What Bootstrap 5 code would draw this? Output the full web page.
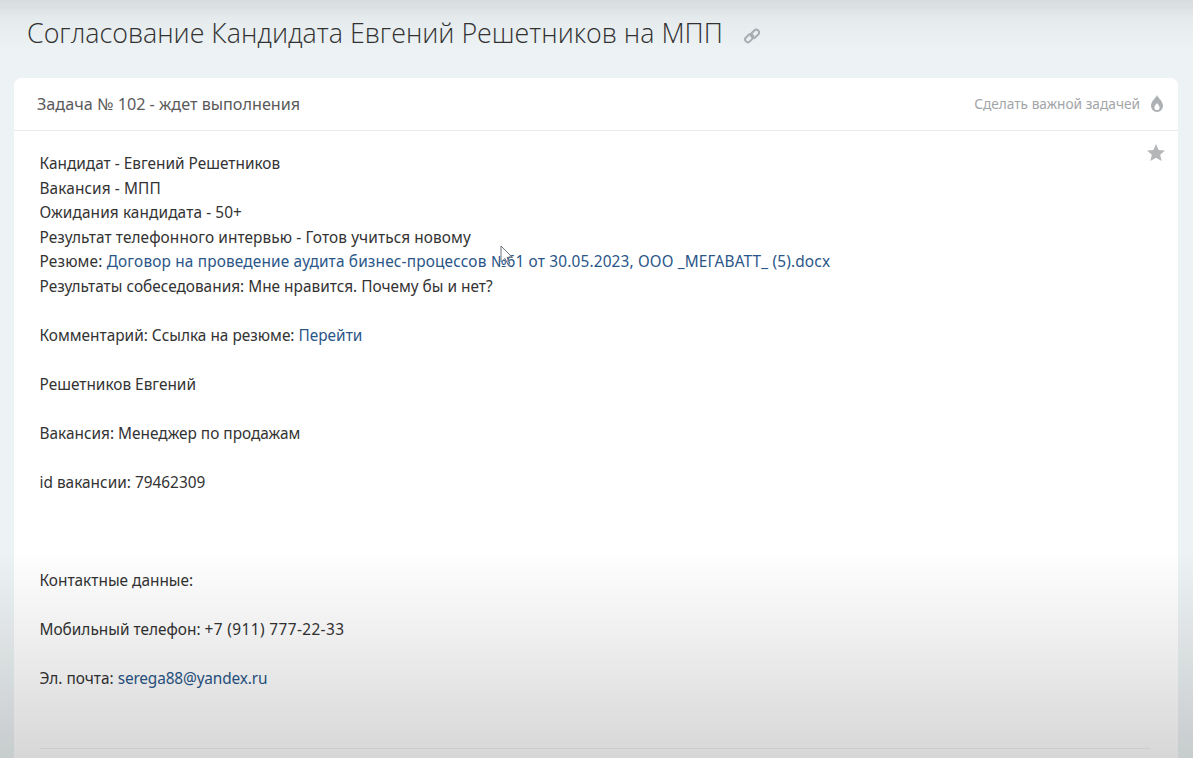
<!DOCTYPE html>
<html lang="ru">
<head>
    <meta charset="UTF-8" />
    <meta name="viewport" content="width=device-width, initial-scale=1" />
    <title>Задача № 102</title>
    <link href="https://cdn.jsdelivr.net/npm/bootstrap@5.3.0/dist/css/bootstrap.min.css" rel="stylesheet" />
    <style>
        html, body {
            height: 758px;
            overflow: hidden;
        }
        body {
            background-color: #edf2f4;
            font-family: "Noto Sans", "Open Sans", sans-serif;
            color: #333;
        }
        .page-wrap {
            padding: 0 15px 0 14px;
        }
        .task-title {
            height: 78px;
            padding: 14px 0 0 13px;
            gap: 21px;
        }
        .task-title h1 {
            font-size: 26.8px;
            font-weight: 300;
            font-family: "Open Sans", "Noto Sans", sans-serif;
            color: #333;
            margin: 0;
            line-height: 37px;
        }
        .title-link {
            margin-top: 14px;
        }
        .task-card {
            border: 0;
            border-radius: 8px 8px 0 0;
            min-height: 700px;
        }
        .task-head {
            height: 53px;
            padding: 0 14px 0 23px;
            background: #fff;
            border-radius: 8px 8px 0 0;
            border-bottom: 1px solid #e9ecee;
            font-size: 16.2px;
            color: #5a5a5a;
        }
        .make-important {
            color: #a2a5a8;
            font-size: 13.7px;
            gap: 10px;
        }
        .task-body {
            padding: 21.2px 26px 0 25.5px;
            font-size: 15.4px;
            line-height: 24.5px;
        }
        .task-body a {
            color: #2a5688;
            text-decoration: none;
        }
        .line-loose {
            letter-spacing: .1px;
        }
        .line-wider {
            letter-spacing: .16px;
        }
        .digits-run {
            letter-spacing: .39px;
        }
        .task-body a.mail-run {
            letter-spacing: -.15px;
        }
        .task-star {
            position: absolute;
            top: 13px;
            right: 13px;
        }
        .task-rule {
            margin: 57px 2px 0 0;
            border-top: 1px solid #f0f0f0;
            opacity: 1;
        }
        .video-shade {
            position: fixed;
            inset: 0;
            pointer-events: none;
            background:
                linear-gradient(to bottom, rgba(0,0,0,.09) 0, rgba(0,0,0,.03) 18px, rgba(0,0,0,0) 50px),
                linear-gradient(to bottom, rgba(0,0,0,0) 550px, rgba(0,0,0,.05) 620px, rgba(0,0,0,.155) 758px);
        }
        .mouse-arrow {
            position: fixed;
            left: 500px;
            top: 245px;
        }
    </style>
</head>
<body>

    <div class="page-wrap">
        <div class="task-title d-flex align-items-start">
            <h1>Согласование Кандидата Евгений Решетников на МПП</h1>
            <svg class="title-link" width="16" height="16" viewBox="0 0 16 16" fill="none" stroke="#a9afb3" stroke-width="2">
                <rect x="0.5" y="7.5" width="9" height="5.5" rx="2.7" transform="rotate(-45 5 10)" />
                <rect x="6.5" y="3" width="9" height="5.5" rx="2.7" transform="rotate(-45 11 5.700)" />
            </svg>
        </div>

        <div class="card task-card">
            <div class="task-head d-flex justify-content-between align-items-center">
                <span>Задача № 102 - ждет выполнения</span>
                <span class="make-important d-flex align-items-center">
                    Сделать важной задачей
                    <svg width="14" height="17" viewBox="0 0 14 17" fill="#aeb1b3">
                        <path fill-rule="evenodd" d="M7 0c1 3 6 6 6 11a6 6 0 0 1-12 0C1 6 6 3 7 0zM7 8c-.8 1.500-2.600 2.600-2.600 4.500a2.600 2.600 0 0 0 5.200 0C9.600 10.600 7.800 9.500 7 8z" />
                    </svg>
                </span>
            </div>
            <div class="task-body position-relative">
                <svg class="task-star" width="18" height="17" viewBox="0 0 18 17" fill="#b4b6b8">
                    <path d="M9 0l2.600 5.900 6.400.6-4.800 4.200 1.400 6.300L9 13.700 3.400 17l1.400-6.300L0 6.500l6.400-.6z" />
                </svg>
                <div>Кандидат - Евгений Решетников</div>
                <div class="line-loose">Вакансия - МПП</div>
                <div class="line-loose">Ожидания кандидата - 50+</div>
                <div class="line-loose">Результат телефонного интервью - Готов учиться новому</div>
                <div class="line-wider">Резюме: <a href="#">Договор на проведение аудита бизнес-процессов №61 от 30.05.2023, ООО _МЕГАВАТТ_ (5).docx</a></div>
                <div>Результаты собеседования: Мне нравится. Почему бы и нет?</div>
                <br />
                <div>Комментарий: Ссылка на резюме: <a href="#">Перейти</a></div>
                <br />
                <div>Решетников Евгений</div>
                <br />
                <div>Вакансия: Менеджер по продажам</div>
                <br />
                <div>id вакансии: 79462309</div>
                <br /><br /><br />
                <div>Контактные данные:</div>
                <br />
                <div>Мобильный телефон: <span class="digits-run">+7 (911) 777-22-33</span></div>
                <br />
                <div>Эл. почта: <a class="mail-run" href="#">serega88@yandex.ru</a></div>
                <hr class="task-rule" />
            </div>
        </div>
    </div>

    <svg class="mouse-arrow" width="14" height="22" viewBox="0 0 14 22" fill="rgba(255,255,255,.35)" stroke="#6d7480" stroke-width="1">
        <path d="M1 1v16l4-3.500 3 6 2-1-3-6h5.500z" />
    </svg>
    <div class="video-shade"></div>

</body>
</html>
